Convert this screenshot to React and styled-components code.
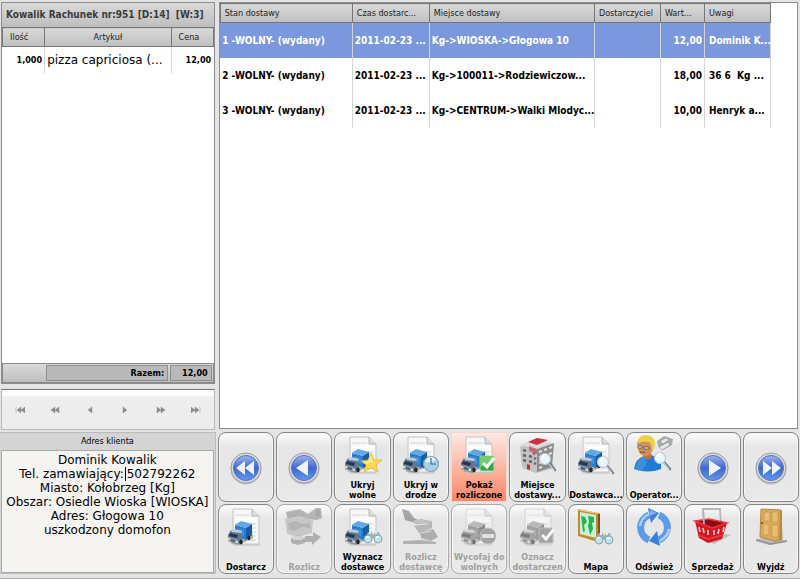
import { useState } from "react";
import styled, { createGlobalStyle, css } from "styled-components";

const bill = [{ id: 1, qty: "1,000", name: "pizza capriciosa (...", price: "12,00" }];

const deliveries = [
  {
    id: 1,
    state: "1 -WOLNY- (wydany)",
    time: "2011-02-23 ...",
    place: "Kg->WIOSKA->Głogowa 10",
    courier: "",
    value: "12,00",
    notes: "Dominik K...",
  },
  {
    id: 2,
    state: "2 -WOLNY- (wydany)",
    time: "2011-02-23 ...",
    place: "Kg->100011->Rodziewiczow...",
    courier: "",
    value: "18,00",
    notes: "36 6  Kg ...",
  },
  {
    id: 3,
    state: "3 -WOLNY- (wydany)",
    time: "2011-02-23 ...",
    place: "Kg->CENTRUM->Walki Mlodyc...",
    courier: "",
    value: "10,00",
    notes: "Henryk a...",
  },
];

const address = [
  "Dominik Kowalik",
  ["Tel. zamawiający:", "502792262"],
  "Miasto: Kołobrzeg [Kg]",
  "Obszar: Osiedle Wioska [WIOSKA]",
  "Adres: Głogowa 10",
  "uszkodzony domofon",
];

/* ---- icons ---- */

const Doc = () => (
  <g>
    <path d="M5 36h28l-1 2H7z" fill="#c4c4c4" opacity=".6" />
    <path d="M6 1h19l7 7v28H6z" fill="#f7f7f7" stroke="#c3c5c7" />
    <path d="M25 1v7h7" fill="#dcdcdc" stroke="#b4b4b4" />
    <path d="M8 7h15M8 16h21M8 20h21M8 24h21M8 28h21M8 32h21M13 15v19M19 15v19M25 15v19" stroke="#d3d6d9" fill="none" />
    <path d="M8 10h21v4H8z" fill="#fff" />
  </g>
);

const Truck = () => (
  <g>
    <path d="M3 35l9 2 14-7v-3l-6-2z" fill="#555" opacity=".4" />
    <path d="M8 17l11 3v12l-11-4z" fill="#2b7cc9" />
    <path d="M8 17l6-4 11 3-6 4z" fill="#5fa9e8" />
    <path d="M19 20l6-4v11l-6 5z" fill="#1b5da4" />
    <path d="M10 20l7 2v6l-7-3z" fill="#3f92dd" />
    <path d="M1 27l3-5 9 2 2 4-1 7-4 1-9-3z" fill="#66788f" />
    <path d="M4 22l3-1 8 2-1 2-9-1z" fill="#c3ced9" />
    <path d="M3 25l8 2-1 3-8-2z" fill="#26364b" />
    <path d="M1 29l10 3v4L1 33z" fill="#97a5b6" />
    <path d="M4 31l4 1v2l-4-1z" fill="#48566a" />
    <circle cx="2" cy="31" r="1" fill="#f6eab0" />
    <circle cx="10" cy="34" r="1" fill="#f6eab0" />
    <ellipse cx="14" cy="34" rx="1.7" ry="2.4" fill="#252525" />
    <ellipse cx="22" cy="30" rx="1.5" ry="2.3" fill="#252525" />
  </g>
);

const Lens = ({ x = 26, y = 26 }) => (
  <g transform={`translate(${x} ${y})`}>
    <path d="M4 4l6 7" stroke="#77808a" strokeWidth="2.6" strokeLinecap="round" />
    <path d="M4 5l5 6" stroke="#e4e7e9" strokeLinecap="round" />
    <circle r="5.5" fill="#e8f5fd" stroke="#bccad4" strokeWidth="1.2" />
    <path d="M-3-1q1-3 4-3" stroke="#fff" fill="none" strokeWidth="2" />
  </g>
);

const Binoculars = ({ x = 20, y = 26 }) => (
  <g transform={`translate(${x} ${y})`}>
    <path d="M1 4l3-6h4l1 3 2-3h4l2 7z" fill="#a3b0b8" />
    <path d="M5-1h2M11-1h2" stroke="#e6edf0" strokeWidth="2" />
    <circle cx="4" cy="5" r="4" fill="#bfe1ea" stroke="#8ba6b1" />
    <circle cx="14" cy="5" r="4" fill="#bfe1ea" stroke="#8ba6b1" />
    <path d="M2 4q1-2 3-1M12 4q1-2 3-1" stroke="#f4fcff" fill="none" strokeWidth="1.5" />
  </g>
);

const icons = {
  deliver: <><Doc /><Truck /></>,
  star: (
    <>
      <Doc /><Truck />
      <path d="M27 17l3 7 8 0-6 5 2 7-7-4-7 4 2-7-5-4 7-1z" fill="#f8d74b" stroke="#deb23a" strokeWidth=".7" />
      <path d="M27 19l2 7-7 2-3-2 5-1z" fill="#fff0a0" opacity=".8" />
    </>
  ),
  clock: (
    <>
      <Doc /><Truck />
      <circle cx="29" cy="28" r="7.5" fill="#a9cfe2" stroke="#7ba7bd" strokeWidth="1.2" />
      <path d="M23 26a6 6 0 0 1 11-2q-5 3-11 2z" fill="#e3f4fb" />
      <path d="M29 22v6h5" stroke="#42718b" fill="none" strokeWidth="1.2" />
    </>
  ),
  check: (
    <>
      <Doc /><Truck />
      <path d="M20 20h14v15H20z" fill="#35a83c" stroke="#b7e1ad" />
      <path d="M21 21h12v6q-6 0-12 4z" fill="#71cf66" />
      <path d="M23 27l4 4 7-9" stroke="#fff" strokeWidth="3" fill="none" />
    </>
  ),
  scout: <><Doc /><Truck /><Binoculars /></>,
  find: <><Doc /><Truck /><Lens x={26} y={26} /></>,
  forbid: (
    <>
      <Doc /><Truck />
      <circle cx="28" cy="28" r="8" fill="#777" stroke="#aaa" />
      <path d="M22 26h12v4H22z" fill="#ddd" />
    </>
  ),
  done: (
    <>
      <Doc /><Truck />
      <path d="M20 20h14v15H20z" fill="#777" stroke="#aaa" />
      <path d="M23 27l4 4 8-10" stroke="#fff" strokeWidth="3" fill="none" />
    </>
  ),
  building: (
    <>
      <path d="M3 32l14 5 19-5-2-4z" fill="#999" opacity=".5" />
      <path d="M1 11l3-2 14 3v24L3 31z" fill="#c2c2c2" />
      <path d="M18 12l17-5-2 24-15 5z" fill="#8b8b8b" />
      <path d="M1 9l14-6 20 4-17 6z" fill="#dadada" />
      <path d="M9 6l9-4 11 2-11 5z" fill="#d0303a" />
      <path d="M10 10l8 3v5l-8-3z" fill="#c5454d" opacity=".7" />
      <path d="M4 14l3 1M4 19l3 1M4 24l3 1M10 20l3 1M10 25l3 1M14 17l2 1M15 22l2 1M15 27l2 1" stroke="#686868" strokeWidth="2.4" />
      <path d="M20 16l3-1M25 14l3-1M30 12l3-1M20 21l3-1M25 19l3-1M20 27l3-1M20 32l3-1M30 18l3-1" stroke="#e2e2e2" strokeWidth="2.2" />
      <path d="M8 28l3 1v5l-3-1z" fill="#c02c36" />
      <Lens x={26} y={23} />
    </>
  ),
  operator: (
    <>
      <path d="M22 5l7-5 9 3-1 6-9 5-5-4z" fill="#a8adb1" />
      <path d="M25 5l6-3 3 2-6 4zM24 11l9-5 2 3-8 5z" fill="#e8eaeb" stroke="#888" strokeWidth=".6" />
      <path d="M-1 33q1-10 10-13l7-1 7 3q4 4 3 11-13 5-27 0z" fill="#1f7bd3" />
      <path d="M1 29q2-6 8-8l3 6-5 8q-4-1-6-2z" fill="#4f9fe6" opacity=".6" />
      <path d="M8 17h8l1 4q-4 5-9 0z" fill="#b9733f" />
      <path d="M2 8q1-7 8-7t8 8q0 11-7 11T3 13z" fill="#cf9060" />
      <path d="M3 7Q3-1 10-1q9 0 10 8 0 6-3 9 0-8-3-10Q8 5 3 7z" fill="#f2cf48" />
      <path d="M3 10h4v2H3zM9 11h5v2H9z" fill="#f3eadd" stroke="#444" strokeWidth=".7" />
      <path d="M5 16q3 1 5 0" stroke="#8e3c2e" fill="none" />
      <Lens x={25} y={22} />
    </>
  ),
  map: (
    <>
      <path d="M1 1l20 4v29L1 28z" fill="#c58a2e" />
      <path d="M1 1l20 4-1 1L0 2z" fill="#f0cc7a" />
      <path d="M3 4l16 3v23L3 26z" fill="#c8f1d3" />
      <path d="M4 8l4 1 2 5-3 3 1 6-2 1-1-9zM11 8l6 1v5l-2 1 1 6-3 6-2-9 1-4z" fill="#25b35a" />
      <path d="M21 5l2 1v25l-2 3z" fill="#7c5316" />
      <Binoculars x={18} y={27} />
    </>
  ),
  refresh: (
    <>
      <path d="M14 32A13.5 13.5 0 0 1 14 7" stroke="#5c9aea" strokeWidth="7" fill="none" />
      <path d="M5 18Q6 10 14 6" stroke="#a9d0f8" strokeWidth="2.5" fill="none" />
      <path d="M13 0l11 5-8 10z" fill="#3b7edb" />
      <path d="M24 7A13.5 13.5 0 0 1 24 32" stroke="#5c9aea" strokeWidth="7" fill="none" />
      <path d="M34 21Q33 28 25 33" stroke="#a9d0f8" strokeWidth="2.5" fill="none" />
      <path d="M25 38l-11-5 8-10z" fill="#3b7edb" />
      <path d="M15 2l7 3-8 3z" fill="#7db4f3" />
    </>
  ),
  basket: (
    <>
      <path d="M10 32l22-6 5 1-17 9z" fill="#888" opacity=".4" />
      <path d="M10 16L9 1h17l1 16" fill="none" stroke="#b4b8bb" strokeWidth="1.8" />
      <path d="M1 13l14-2 18 4-5 16-14 4-9-5z" fill="#d21820" />
      <path d="M1 13l14-2 18 4-15 5z" fill="#8f0a11" stroke="#e93a3f" strokeWidth="1.5" />
      <path d="M5 19l1 5M9 20l1 5M14 22v5M20 22v5M25 21l-1 5M30 19l-1 5" stroke="#f6c4c4" strokeWidth="1.7" />
      <path d="M4 27l10 4 15-4" stroke="#ef3d42" fill="none" strokeWidth="1.5" />
      <path d="M10 16L9 1" stroke="#b4b8bb" strokeWidth="1.8" />
    </>
  ),
  door: (
    <>
      <path d="M4 31l20-2 11 4-17 4z" fill="#b8babc" />
      <path d="M4 31l14 4v2L4 33zM18 35l17-3v2l-17 3z" fill="#95989a" />
      <path d="M9 1l20 1 1 29-7 2L8 29z" fill="#dba95a" stroke="#b58a3d" />
      <path d="M28 2l2 1v29l-3 1z" fill="#b98a3e" />
      <path d="M12 4h6v9h-6zM20 4h6v10h-6zM11 16h6v11h-6zM20 17h6v12h-6z" fill="#e6bf77" stroke="#c79a4c" strokeWidth=".8" />
      <circle cx="10" cy="15" r="1" fill="#624818" />
    </>
  ),
  camera: (
    <>
      <path d="M1 4l14-3 8 5 8-6 5 0 1 10-5 2-9-1-4 3H3z" fill="#8f8f8f" />
      <path d="M0 11l14-3 14 4-1 13-14 4-11-3z" fill="#b5b5b5" />
      <path d="M4 4l10-2 6 4-12 3zM3 15l8-2 6 3 8-1v5l-8-1-7 4-6-1z" fill="#878787" opacity=".7" />
      <path d="M31 1l4 1v6l-4 1z" fill="#777" />
      <path d="M6 30l7-3 7 3v5l-7 2-7-2zM20 28h8v-4l8 5-9 8v-3h-7z" fill="#8c8c8c" />
      <ellipse cx="13" cy="30" rx="6" ry="2" fill="#ccc" />
    </>
  ),
  hand: (
    <>
      <path d="M0 1l7 2 5 7 4 2-3 3-10-3z" fill="#777" />
      <path d="M10 13l9-2 11 2-1 5-11 2z" fill="#a8a8a8" />
      <path d="M12 18l18-4v6l-13 5z" fill="#999" />
      <path d="M18 24l13-3 5 8-7 4-10-3z" fill="#888" />
      <path d="M1 33l19-1 14 2v2H1z" fill="#8e8e8e" />
      <path d="M12 17l14-1M19 25l10-2" stroke="#ddd" />
    </>
  ),
};

const arrowShapes = {
  prev2: "M18 12v14l-9-7zM27 12v14l-9-7z",
  prev: "M23 11v16l-12-8z",
  next: "M15 11v16l12-8z",
  next2: "M11 12v14l9-7zM20 12v14l9-7z",
};

const RoundArrow = ({ kind }) => (
  <svg viewBox="0 0 38 38" aria-hidden="true">
    <defs>
      <linearGradient id={`ball-${kind}`} x1="0" y1="0" x2="0" y2="1">
        <stop offset="0" stopColor="#9db5ee" />
        <stop offset=".5" stopColor="#3f66cf" />
        <stop offset="1" stopColor="#5c9cf0" />
      </linearGradient>
    </defs>
    <circle cx="19" cy="20" r="15.5" fill="#9a9a9a" opacity=".5" />
    <circle cx="19" cy="19" r="15" fill="#d9dbde" stroke="#9a9da2" />
    <circle cx="19" cy="19" r="12.5" fill={`url(#ball-${kind})`} stroke="#5871b8" />
    <path d={arrowShapes[kind]} fill="#eef3ff" />
  </svg>
);

const actions = [
  { id: "prev2", label: "Początek", arrow: true },
  { id: "prev", label: "Wstecz", arrow: true },
  { id: "star", label: "Ukryj\nwolne" },
  { id: "clock", label: "Ukryj w\ndrodze" },
  { id: "check", label: "Pokaż\nrozliczone", active: true },
  { id: "building", label: "Miejsce\ndostawy..." },
  { id: "find", label: "Dostawca..." },
  { id: "operator", label: "Operator..." },
  { id: "next", label: "Dalej", arrow: true },
  { id: "next2", label: "Koniec", arrow: true },
  { id: "deliver", label: "Dostarcz" },
  { id: "camera", label: "Rozlicz", disabled: true },
  { id: "scout", label: "Wyznacz\ndostawce" },
  { id: "hand", label: "Rozlicz\ndostawcę", disabled: true },
  { id: "forbid", label: "Wycofaj do\nwolnych", disabled: true },
  { id: "done", label: "Oznacz\ndostarczen", disabled: true },
  { id: "map", label: "Mapa" },
  { id: "refresh", label: "Odśwież" },
  { id: "basket", label: "Sprzedaż" },
  { id: "door", label: "Wyjdź" },
];

const navShapes = [
  ["Pierwszy", "M1 1v6M6 1v6L2 4zM10 1v6L6 4z"],
  ["Strona wstecz", "M5 1v6L1 4zM9 1v6L5 4z"],
  ["Poprzedni", "M7 1v6L3 4z"],
  ["Następny", "M3 1v6l4-3z"],
  ["Strona dalej", "M1 1v6l4-3zM5 1v6l4-3z"],
  ["Ostatni", "M0 1v6l4-3zM4 1v6l4-3zM9 1v6"],
];

const App = () => {
  const [selected, setSelected] = useState(1);

  return (
    <Screen>
      <GlobalStyle />
      <Side>
        <Bill>
          <BillTitle>Kowalik Rachunek nr:951 [D:14]{"  "}[W:3]</BillTitle>
          <BillTable>
            <colgroup>
              <Col $w={20} />
              <Col $w={60} />
              <Col $w={20} />
            </colgroup>
            <thead>
              <tr>
                <HeadCell>Ilość</HeadCell>
                <HeadCell $align="center">Artykuł</HeadCell>
                <HeadCell>Cena</HeadCell>
              </tr>
            </thead>
            <tbody>
              {bill.map((item) => (
                <tr key={item.id}>
                  <BillCell $align="right">{item.qty}</BillCell>
                  <BillCell $big>{item.name}</BillCell>
                  <BillCell $align="right">{item.price}</BillCell>
                </tr>
              ))}
            </tbody>
          </BillTable>
          <Total>
            <TotalBox>Razem:</TotalBox>
            <TotalBox>12,00</TotalBox>
          </Total>
        </Bill>
        <Navigator>
          {navShapes.map(([name, d]) => (
            <NavButton key={name} aria-label={name}>
              <svg width="10" height="8" viewBox="0 0 10 8">
                <path d={d} fill="#8a8a8a" stroke="#8a8a8a" strokeWidth=".4" />
              </svg>
            </NavButton>
          ))}
        </Navigator>
        <Client>
          <ClientTitle>Adres klienta</ClientTitle>
          <ClientBox>
            {address.map((line, i) =>
              Array.isArray(line) ? (
                <p key={i}>
                  {line[0]}
                  <Caret />
                  {line[1]}
                </p>
              ) : (
                <p key={i}>{line}</p>
              )
            )}
          </ClientBox>
        </Client>
      </Side>
      <Main>
        <Deliveries>
          <DeliveryTable>
            <colgroup>
              <Col $w={24} />
              <Col $w={14} />
              <Col $w={30} />
              <Col $w={12} />
              <Col $w={8} />
              <Col $w={12} />
            </colgroup>
            <thead>
              <tr>
                <HeadCell>Stan dostawy</HeadCell>
                <HeadCell>Czas dostarc...</HeadCell>
                <HeadCell>Miejsce dostawy</HeadCell>
                <HeadCell>Dostarczyciel</HeadCell>
                <HeadCell>Wart...</HeadCell>
                <HeadCell>Uwagi</HeadCell>
              </tr>
            </thead>
            <tbody>
              {deliveries.map((d) => (
                <DeliveryRow key={d.id} $selected={d.id === selected} onClick={() => setSelected(d.id)}>
                  <Cell>{d.state}</Cell>
                  <Cell>{d.time}</Cell>
                  <Cell>{d.place}</Cell>
                  <Cell>{d.courier}</Cell>
                  <Cell $align="right">{d.value}</Cell>
                  <Cell $indent>{d.notes}</Cell>
                </DeliveryRow>
              ))}
            </tbody>
          </DeliveryTable>
        </Deliveries>
        <Actions>
          {actions.map((a) =>
            a.arrow ? (
              <ActionButton key={a.id} $arrow aria-label={a.label}>
                <RoundArrow kind={a.id} />
              </ActionButton>
            ) : (
              <ActionButton key={a.id} $active={a.active} disabled={a.disabled}>
                <svg viewBox="0 0 38 38" aria-hidden="true">
                  {icons[a.id]}
                </svg>
                <ActionLabel>{a.label}</ActionLabel>
              </ActionButton>
            )
          )}
        </Actions>
      </Main>
    </Screen>
  );
};

const GlobalStyle = createGlobalStyle`
  * {
    box-sizing: border-box;
  }
  body {
    margin: 0;
    background: #e4e4e4;
    color: #000;
    font-family: "DejaVu Sans Condensed", "DejaVu Sans", sans-serif;
    font-size: 9px;
  }
  p {
    margin: 0;
  }
  button {
    font: inherit;
    color: inherit;
    padding: 0;
  }
`;

const metal = css`
  background: linear-gradient(#d9d9d9, #bebebe);
`;

const Screen = styled.div`
  display: grid;
  grid-template-columns: 27% 1fr;
  gap: 2px;
  min-height: 100vh;
  padding: 2px 1px 4px 0;
  border-bottom: 1px solid #aaa;
`;

const Side = styled.div`
  display: flex;
  flex-direction: column;
  min-width: 0;
`;

const Bill = styled.section`
  flex: 1;
  display: flex;
  flex-direction: column;
  margin: 0 1px 5px;
  border: 1px solid #8d8d8d;
  background: #fff;
`;

const BillTitle = styled.h1`
  ${metal}
  margin: 0;
  padding: 0 4px;
  color: #3c3c3c;
  font-size: 10px;
  line-height: 24px;
  white-space: pre;
  overflow: hidden;
`;

const BillTable = styled.table`
  width: 100%;
  table-layout: fixed;
  border-collapse: collapse;
`;

const Col = styled.col`
  width: ${({ $w }) => $w}%;
`;

const HeadCell = styled.th`
  ${metal}
  height: 19px;
  padding: 0 4px;
  border: 1px solid #777;
  color: #222;
  font-weight: normal;
  text-align: ${({ $align }) => $align || "left"};
  white-space: nowrap;
  overflow: hidden;

  ${BillTable} & {
    padding: 0 7px;
  }
`;

const Cell = styled.td`
  height: 35px;
  padding: 0 2px 0 ${({ $indent }) => ($indent ? 4 : 2)}px;
  border-right: 1px solid #d4d4d4;
  font-size: 10px;
  font-weight: bold;
  text-align: ${({ $align }) => $align || "left"};
  white-space: pre;
`;

const BillCell = styled(Cell)`
  height: 26px;
  padding: 0 2px;
  font-size: 9px;

  &:last-child {
    border-right: none;
  }
  ${({ $big }) =>
    $big &&
    css`
      font: 12px/16px "DejaVu Sans", sans-serif;
    `}
`;

const Total = styled.div`
  ${metal}
  display: grid;
  grid-template-columns: 20% 1fr 20%;
  margin-top: auto;
  padding: 1px;
  border: 1px solid #888;
`;

const TotalBox = styled.div`
  height: 16px;
  padding: 0 3px;
  border: 1px solid #8f8f8f;
  background: #b9b9b9;
  font-weight: bold;
  line-height: 14px;
  text-align: right;

  &:first-child {
    grid-column: 2;
    margin-right: 2px;
  }
`;

const Navigator = styled.div`
  display: grid;
  grid-template-columns: repeat(6, 1fr);
  height: 41px;
  margin: 0 1px 2px;
  border: 1px solid #b9b9b9;
  border-top-color: #777;
  background: linear-gradient(#fff 5px, #eee 7px, #ececec);
`;

const NavButton = styled.button`
  display: grid;
  place-items: center;
  border: none;
  background: none;
`;

const Client = styled.section`
  display: flex;
  flex-direction: column;
  height: 142px;
  border: 1px solid #bbb;
  border-left: none;
  background: #d4d4d4;
`;

const ClientTitle = styled.h2`
  margin: 0;
  font-size: 9px;
  font-weight: normal;
  line-height: 17px;
  text-align: center;
`;

const ClientBox = styled.div`
  flex: 1;
  margin: 0 1px;
  padding-top: 2px;
  border: 1px solid #aaa;
  background: #f5f4f1;
  font: 12px/14px "DejaVu Sans", sans-serif;
  text-align: center;
  white-space: nowrap;
`;

const Caret = styled.span`
  display: inline-block;
  width: 1px;
  height: 14px;
  margin: 0 1px;
  background: #000;
  vertical-align: top;
`;

const Main = styled.div`
  display: flex;
  flex-direction: column;
  min-width: 0;
`;

const Deliveries = styled.section`
  flex: 1;
  margin: 0 1px 3px;
  border: 1px solid #8d8d8d;
  background: #fff;
`;

const DeliveryTable = styled.table`
  width: calc(100% - 26px);
  table-layout: fixed;
  border-collapse: collapse;
`;

const DeliveryRow = styled.tr`
  ${({ $selected }) =>
    $selected &&
    css`
      background: #7b97de;
      color: #fff;
    `}
`;

const Actions = styled.div`
  display: grid;
  grid-template-columns: repeat(10, 1fr);
  gap: 2px;
`;

const ActionButton = styled.button`
  display: flex;
  flex-direction: column;
  align-items: center;
  justify-content: ${({ $arrow }) => ($arrow ? "center" : "space-between")};
  height: 70px;
  min-width: 0;
  padding: 3px 0 1px;
  border: 1px solid #858585;
  border-radius: 8px;
  background: linear-gradient(#fbfbfb, #e6e6e6 14px, #e9e9e9);
  box-shadow: inset 0 0 0 1px #f6f6f6;

  svg {
    width: 38px;
    height: 38px;
    overflow: visible;
  }

  &:disabled {
    border-color: #aaa;
    color: #a0a0a0;

    svg {
      filter: grayscale(1);
      opacity: 0.6;
    }
  }

  ${({ $active }) =>
    $active &&
    css`
      border-color: #f3d8cf;
      border-radius: 0;
      background: linear-gradient(#fde9e2, #fbb8a2 50%, #f98566);
      box-shadow: none;
    `}
`;

const ActionLabel = styled.span`
  font-weight: bold;
  line-height: 10px;
  text-align: center;
  white-space: pre-line;
`;

export default App;
